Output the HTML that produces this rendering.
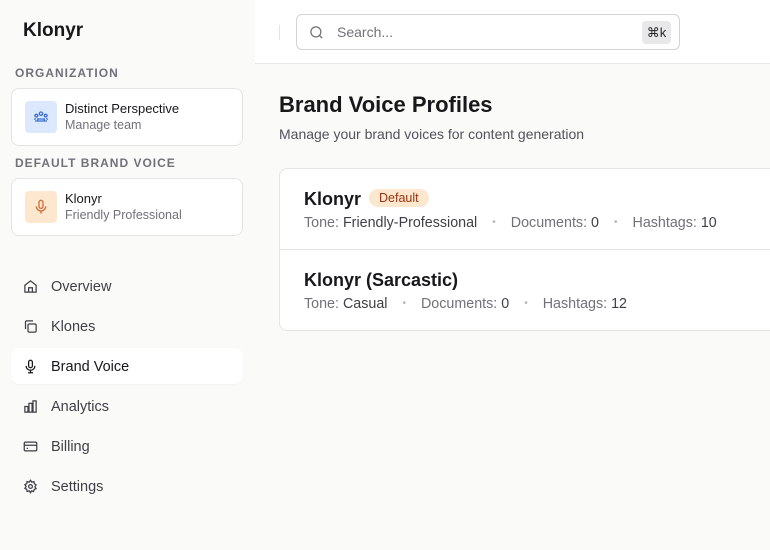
<!DOCTYPE html>
<html><head><style>
*{box-sizing:border-box;margin:0;padding:0}
body{width:770px;height:550px;overflow:hidden;background:#fafaf9;font-family:"Liberation Sans",sans-serif;color:#18181b;position:relative}
.side{position:absolute;left:0;top:0;width:255px;height:550px;background:#fafaf9}
.logo{position:absolute;left:23px;top:20px;font-size:19px;font-weight:bold}
.lab{position:absolute;left:15px;font-size:12px;letter-spacing:1px;color:#71717a;font-weight:bold}
.card{position:absolute;left:11px;width:232px;height:58px;background:#fff;border:1px solid #e4e4e7;border-radius:8px}
.ic{position:absolute;left:13px;top:12px;width:32px;height:32px;border-radius:4px;display:flex;align-items:center;justify-content:center}
.ct{position:absolute;left:53px;top:12px;font-size:13px;color:#18181b}
.cs{position:absolute;left:53px;top:29px;font-size:12.5px;color:#71717a}
.nav{position:absolute;left:11px;width:232px;height:36px;border-radius:8px;font-size:14.5px;color:#3f3f46}
.nav svg{position:absolute;left:12px;top:11px}
.nav span{position:absolute;left:40px;top:11px}
.nav.act{background:#fff;color:#18181b;box-shadow:0 1px 2px rgba(0,0,0,.04)}
.hdr{position:absolute;left:255px;top:0;width:515px;height:64px;background:#fff;border-bottom:1px solid #e7e7e9}
.search{position:absolute;left:41px;top:14px;width:384px;height:36px;border:1px solid #d4d4d8;border-radius:6px;background:#fff}
.kbd{position:absolute;right:8px;top:6px;width:29px;height:23px;background:#e8e8ea;border-radius:4px;font-size:13px;text-align:center;line-height:23px;color:#27272a}
h1{position:absolute;left:279px;top:92px;font-size:22px;font-weight:bold}
.sub{position:absolute;left:279px;top:126px;font-size:14px;color:#52525b}
.list{position:absolute;left:279px;top:168px;width:520px;height:163px;background:#fff;border:1px solid #e4e4e7;border-radius:8px}
.row{position:absolute;left:24px;font-size:14.3px;color:#71717a}
.row b{font-weight:normal;color:#3f3f46}
.nm{position:absolute;left:24px;font-size:18px;font-weight:bold;color:#18181b}
.badge{display:inline-block;margin-left:8px;background:#fde7cf;color:#9a3412;font-size:12.5px;font-weight:normal;padding:2px 10px;border-radius:10px;vertical-align:3px}
.dot{color:#b4b4bb;margin:0 15px;font-size:10px;vertical-align:2px}
</style></head><body>
<div class="side">
<div class="logo">Klonyr</div>
<div class="lab" style="top:66px">ORGANIZATION</div>
<div class="card" style="top:88px"><div class="ic" style="background:#dbe8fd"><svg width="16" height="16" viewBox="0 0 24 24" fill="none" stroke="#3b6fd4" stroke-width="2"><circle cx="12" cy="7" r="2.5"/><circle cx="5" cy="10" r="2"/><circle cx="19" cy="10" r="2"/><path d="M3 18h18M7 18v-3h10v3M2 16l2-2M22 16l-2-2"/></svg></div><div class="ct">Distinct Perspective</div><div class="cs">Manage team</div></div>
<div class="lab" style="top:156px">DEFAULT BRAND VOICE</div>
<div class="card" style="top:178px"><div class="ic" style="background:#fde7cf"><svg width="16" height="16" viewBox="0 0 24 24" fill="none" stroke="#d0703a" stroke-width="2"><rect x="9" y="2" width="6" height="12" rx="3"/><path d="M5 11a7 7 0 0014 0M12 18v4"/></svg></div><div class="ct">Klonyr</div><div class="cs">Friendly Professional</div></div>
<div class="nav" style="top:268px"><svg width="15" height="15" viewBox="0 0 24 24" fill="none" stroke="#3f3f46" stroke-width="2"><path d="M3 10l9-7 9 7v11H3z"/><path d="M9 21v-7h6v7"/></svg><span>Overview</span></div>
<div class="nav" style="top:308px"><svg width="15" height="15" viewBox="0 0 24 24" fill="none" stroke="#3f3f46" stroke-width="2"><rect x="8" y="8" width="13" height="13" rx="2"/><path d="M4 16V5a2 2 0 012-2h10"/></svg><span>Klones</span></div>
<div class="nav act" style="top:348px"><svg width="15" height="15" viewBox="0 0 24 24" fill="none" stroke="#18181b" stroke-width="2"><rect x="9" y="2" width="6" height="12" rx="3"/><path d="M5 11a7 7 0 0014 0M12 18v4M8 22h8"/></svg><span>Brand Voice</span></div>
<div class="nav" style="top:388px"><svg width="15" height="15" viewBox="0 0 24 24" fill="none" stroke="#3f3f46" stroke-width="2"><rect x="3" y="12" width="5" height="9"/><rect x="9.5" y="7" width="5" height="14"/><rect x="16" y="3" width="5" height="18"/></svg><span>Analytics</span></div>
<div class="nav" style="top:428px"><svg width="15" height="15" viewBox="0 0 24 24" fill="none" stroke="#3f3f46" stroke-width="2"><rect x="2" y="5" width="20" height="14" rx="2"/><path d="M2 10h20M6 15h2"/></svg><span>Billing</span></div>
<div class="nav" style="top:468px"><svg width="15" height="15" viewBox="0 0 24 24" fill="none" stroke="#3f3f46" stroke-width="2"><circle cx="12" cy="12" r="3"/><path d="M12 2l2 3 3.5-1 .5 3.5 3 2-2 3 2 3-3 1-1 3.5-3.5-1L12 22l-2-3-3.5 1L6 16.5 3 15l2-3-2-3 3-1.5L6.5 4 10 5z"/></svg><span>Settings</span></div>
</div>
<div class="hdr">
<div style="position:absolute;left:24px;top:25px;width:1px;height:15px;background:#e4e4e7"></div>
<div class="search"><svg style="position:absolute;left:12px;top:10px" width="15" height="15" viewBox="0 0 24 24" fill="none" stroke="#71717a" stroke-width="2"><circle cx="11" cy="11" r="8"/><path d="M21 21l-4.3-4.3"/></svg><span style="position:absolute;left:40px;top:9px;font-size:14px;color:#71717a">Search...</span><div class="kbd">⌘k</div></div>
</div>
<h1>Brand Voice Profiles</h1>
<div class="sub">Manage your brand voices for content generation</div>
<div class="list">
<div class="nm" style="top:20px">Klonyr<span class="badge">Default</span></div>
<div class="row" style="top:46px">Tone: <b>Friendly-Professional</b><span class="dot">•</span>Documents: <b>0</b><span class="dot">•</span>Hashtags: <b>10</b></div>
<div style="position:absolute;left:0;top:80px;width:100%;height:1px;background:#e4e4e7"></div>
<div class="nm" style="top:101px">Klonyr (Sarcastic)</div>
<div class="row" style="top:127px">Tone: <b>Casual</b><span class="dot">•</span>Documents: <b>0</b><span class="dot">•</span>Hashtags: <b>12</b></div>
</div>
</body></html>
